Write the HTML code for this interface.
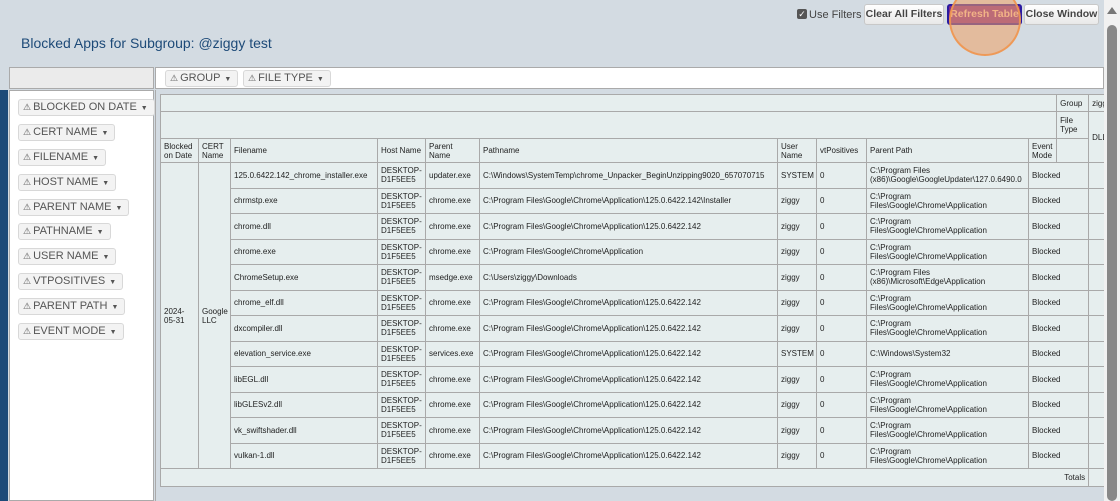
<!DOCTYPE html>
<html><head><style>
*{box-sizing:border-box;margin:0;padding:0}
body{width:1120px;height:501px;overflow:hidden;background:#d3dbe2;font-family:"Liberation Sans",Arial,sans-serif;position:relative}
.abs{position:absolute}
.btn{position:absolute;top:4px;height:21px;border:1px solid #c8c8c8;border-radius:3px;background:linear-gradient(#fff,#e8e8e8);font-size:10.5px;font-weight:bold;color:#444;text-align:center;line-height:19px}
.pill{position:absolute;height:17px;border:1px solid #d8d8d8;border-radius:3px;background:#f3f3f3;font-size:11px;color:#555;line-height:15px;padding:0 6px 0 4px;white-space:nowrap}
.pill small{font-size:7px;margin-left:4px}
.pill i{font-style:normal;font-size:9px;margin-right:2px}
table{border-collapse:collapse;table-layout:fixed;font-size:8px;color:#222}
td{border:1px solid #a9a9a9;padding:0 3px;background:#e6eeee;vertical-align:middle;line-height:9px;overflow:hidden;white-space:nowrap}
td.w{white-space:normal}
tr.d td{height:25.5px}
</style></head><body>
<div class="abs" style="left:797px;top:9px;width:10px;height:10px;background:#555;border-radius:2px;color:#fff;font-size:9px;line-height:10px;text-align:center">✓</div>
<div class="abs" style="left:809px;top:9px;font-size:11px;color:#444">Use Filters</div>
<div class="btn" style="left:864px;width:80px">Clear All Filters</div>
<div class="btn" style="left:947px;width:75px;background:#7d2b8e;border:2px solid #2a1aa0;color:#f3c9b0;line-height:17px">Refresh Table</div>
<div class="btn" style="left:1024px;width:75px">Close Window</div>
<div class="abs" style="left:949px;top:-16px;width:72px;height:72px;border-radius:50%;background:rgba(240,160,100,.55);border:2px solid rgba(240,150,80,.9)"></div>
<div class="abs" style="left:21px;top:35px;font-size:14px;color:#1d4a78">Blocked Apps for Subgroup: @ziggy test</div>
<div class="abs" style="left:0;top:90px;width:8px;height:411px;background:#1d4a78"></div>
<div class="abs" style="left:9px;top:67px;width:145px;height:22px;background:#ebebeb;border:1px solid #aaa"></div>
<div class="abs" style="left:9px;top:90px;width:145px;height:411px;background:#fff;border:1px solid #aaa"></div>
<div class="abs" style="left:155px;top:67px;width:949px;height:22px;background:#fff;border:1px solid #aaa"></div>
<div class="pill" style="left:165px;top:70px"><i>⚠</i>GROUP<small>▼</small></div>
<div class="pill" style="left:243px;top:70px"><i>⚠</i>FILE TYPE<small>▼</small></div>
<div class="pill" style="left:18px;top:99px"><i>⚠</i>BLOCKED ON DATE<small>▼</small></div>
<div class="pill" style="left:18px;top:124px"><i>⚠</i>CERT NAME<small>▼</small></div>
<div class="pill" style="left:18px;top:149px"><i>⚠</i>FILENAME<small>▼</small></div>
<div class="pill" style="left:18px;top:174px"><i>⚠</i>HOST NAME<small>▼</small></div>
<div class="pill" style="left:18px;top:199px"><i>⚠</i>PARENT NAME<small>▼</small></div>
<div class="pill" style="left:18px;top:223px"><i>⚠</i>PATHNAME<small>▼</small></div>
<div class="pill" style="left:18px;top:248px"><i>⚠</i>USER NAME<small>▼</small></div>
<div class="pill" style="left:18px;top:273px"><i>⚠</i>VTPOSITIVES<small>▼</small></div>
<div class="pill" style="left:18px;top:298px"><i>⚠</i>PARENT PATH<small>▼</small></div>
<div class="pill" style="left:18px;top:323px"><i>⚠</i>EVENT MODE<small>▼</small></div>
<div class="abs" style="left:155px;top:90px;width:949px;height:411px;border-left:1px solid #aaa;overflow:hidden">
<table style="position:absolute;left:4px;top:4px;width:976px">
<colgroup><col style="width:38px"><col style="width:32px"><col style="width:147px"><col style="width:48px"><col style="width:54px"><col style="width:298px"><col style="width:39px"><col style="width:50px"><col style="width:162px"><col style="width:28px"><col style="width:32px"><col style="width:48px"></colgroup>
<tr style="height:17px"><td colspan="10"></td><td>Group</td><td>ziggy</td></tr>
<tr style="height:27px"><td colspan="10"></td><td class="w">File Type</td><td rowspan="2">DLL</td></tr>
<tr style="height:24px"><td class="w">Blocked on Date</td><td class="w">CERT Name</td><td>Filename</td><td class="w">Host Name</td><td class="w">Parent Name</td><td>Pathname</td><td class="w">User Name</td><td>vtPositives</td><td>Parent Path</td><td class="w">Event Mode</td><td></td></tr>
<tr class="d"><td rowspan="12" class="w">2024-05-31</td><td rowspan="12" class="w">Google LLC</td><td>125.0.6422.142_chrome_installer.exe</td><td class="w">DESKTOP-D1F5EE5</td><td>updater.exe</td><td>C:\Windows\SystemTemp\chrome_Unpacker_BeginUnzipping9020_657070715</td><td>SYSTEM</td><td>0</td><td class="w">C:\Program Files (x86)\Google\GoogleUpdater\127.0.6490.0</td><td colspan="2">Blocked</td><td></td></tr>
<tr class="d"><td>chrmstp.exe</td><td class="w">DESKTOP-D1F5EE5</td><td>chrome.exe</td><td>C:\Program Files\Google\Chrome\Application\125.0.6422.142\Installer</td><td>ziggy</td><td>0</td><td class="w">C:\Program Files\Google\Chrome\Application</td><td colspan="2">Blocked</td><td></td></tr>
<tr class="d"><td>chrome.dll</td><td class="w">DESKTOP-D1F5EE5</td><td>chrome.exe</td><td>C:\Program Files\Google\Chrome\Application\125.0.6422.142</td><td>ziggy</td><td>0</td><td class="w">C:\Program Files\Google\Chrome\Application</td><td colspan="2">Blocked</td><td></td></tr>
<tr class="d"><td>chrome.exe</td><td class="w">DESKTOP-D1F5EE5</td><td>chrome.exe</td><td>C:\Program Files\Google\Chrome\Application</td><td>ziggy</td><td>0</td><td class="w">C:\Program Files\Google\Chrome\Application</td><td colspan="2">Blocked</td><td></td></tr>
<tr class="d"><td>ChromeSetup.exe</td><td class="w">DESKTOP-D1F5EE5</td><td>msedge.exe</td><td>C:\Users\ziggy\Downloads</td><td>ziggy</td><td>0</td><td class="w">C:\Program Files (x86)\Microsoft\Edge\Application</td><td colspan="2">Blocked</td><td></td></tr>
<tr class="d"><td>chrome_elf.dll</td><td class="w">DESKTOP-D1F5EE5</td><td>chrome.exe</td><td>C:\Program Files\Google\Chrome\Application\125.0.6422.142</td><td>ziggy</td><td>0</td><td class="w">C:\Program Files\Google\Chrome\Application</td><td colspan="2">Blocked</td><td></td></tr>
<tr class="d"><td>dxcompiler.dll</td><td class="w">DESKTOP-D1F5EE5</td><td>chrome.exe</td><td>C:\Program Files\Google\Chrome\Application\125.0.6422.142</td><td>ziggy</td><td>0</td><td class="w">C:\Program Files\Google\Chrome\Application</td><td colspan="2">Blocked</td><td></td></tr>
<tr class="d"><td>elevation_service.exe</td><td class="w">DESKTOP-D1F5EE5</td><td>services.exe</td><td>C:\Program Files\Google\Chrome\Application\125.0.6422.142</td><td>SYSTEM</td><td>0</td><td>C:\Windows\System32</td><td colspan="2">Blocked</td><td></td></tr>
<tr class="d"><td>libEGL.dll</td><td class="w">DESKTOP-D1F5EE5</td><td>chrome.exe</td><td>C:\Program Files\Google\Chrome\Application\125.0.6422.142</td><td>ziggy</td><td>0</td><td class="w">C:\Program Files\Google\Chrome\Application</td><td colspan="2">Blocked</td><td></td></tr>
<tr class="d"><td>libGLESv2.dll</td><td class="w">DESKTOP-D1F5EE5</td><td>chrome.exe</td><td>C:\Program Files\Google\Chrome\Application\125.0.6422.142</td><td>ziggy</td><td>0</td><td class="w">C:\Program Files\Google\Chrome\Application</td><td colspan="2">Blocked</td><td></td></tr>
<tr class="d"><td>vk_swiftshader.dll</td><td class="w">DESKTOP-D1F5EE5</td><td>chrome.exe</td><td>C:\Program Files\Google\Chrome\Application\125.0.6422.142</td><td>ziggy</td><td>0</td><td class="w">C:\Program Files\Google\Chrome\Application</td><td colspan="2">Blocked</td><td></td></tr>
<tr class="d"><td>vulkan-1.dll</td><td class="w">DESKTOP-D1F5EE5</td><td>chrome.exe</td><td>C:\Program Files\Google\Chrome\Application\125.0.6422.142</td><td>ziggy</td><td>0</td><td class="w">C:\Program Files\Google\Chrome\Application</td><td colspan="2">Blocked</td><td></td></tr>
<tr style="height:18px"><td colspan="11" style="text-align:right">Totals</td><td></td></tr>
</table>
</div>
<div class="abs" style="left:1104px;top:0;width:16px;height:501px;background:#f1f1f1"></div>
<div class="abs" style="left:1107px;top:7px;width:0;height:0;border-left:5px solid transparent;border-right:5px solid transparent;border-bottom:7px solid #777"></div>
<div class="abs" style="left:1107px;top:25px;width:10px;height:476px;background:#888;border-radius:5px"></div>
</body></html>
